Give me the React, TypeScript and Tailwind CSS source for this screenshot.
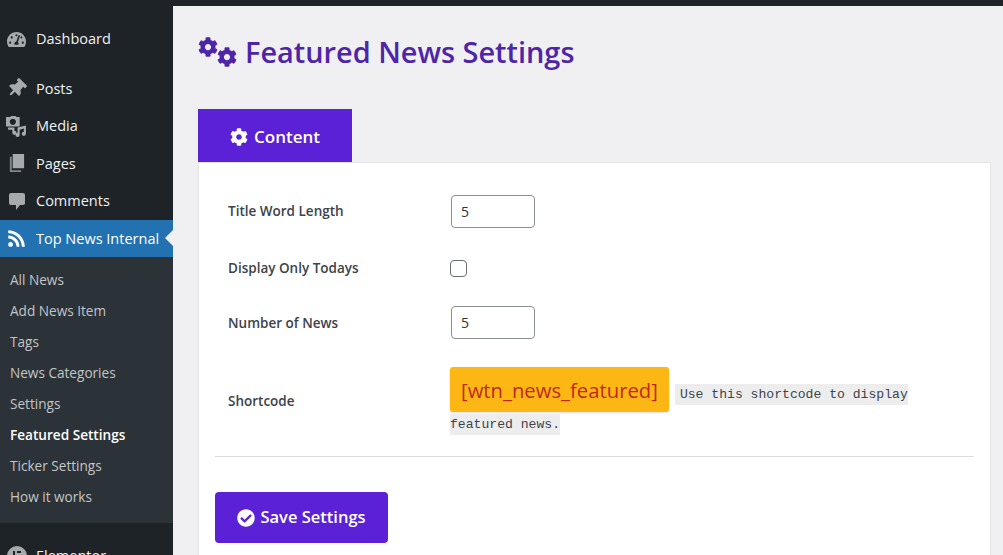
import { FaCheckCircle, FaCog, FaRss, FaTachometerAlt, FaThumbtack } from "react-icons/fa";

const font = "font-['Open_Sans','Noto_Sans',sans-serif]";

function MediaIcon() {
  return (
    <svg viewBox="0 0 20 20" className="h-[21px] w-[21px]" fill="#a7aaad">
      <path d="M0 1h4l1-1h4l1 1h3v9H0z M6.5 2.5a3 3 0 1 0 .01 0z" fillRule="evenodd" />
      <path d="M11 11l8-2v8a2 2 0 1 1-2-2V12l-4 1v5a2 2 0 1 1-2-2z" />
      <path d="M2 11h6v3a2 2 0 1 1-2 2v-3H2z" />
    </svg>
  );
}

function PagesIcon() {
  return (
    <svg viewBox="0 0 20 20" className="h-[19px] w-[19px]" fill="#a7aaad">
      <path d="M6 0h12v15H6z" />
      <path d="M3 3h2v14h10v2H3z" opacity="0.75" />
    </svg>
  );
}

function CommentIcon() {
  return (
    <svg viewBox="0 0 20 20" className="h-[20px] w-[20px]" fill="#a7aaad">
      <path d="M4 2h12a2 2 0 0 1 2 2v8a2 2 0 0 1-2 2h-3l-4 5v-5H4a2 2 0 0 1-2-2V4a2 2 0 0 1 2-2z" />
    </svg>
  );
}

function ElementorIcon() {
  return (
    <svg viewBox="0 0 20 20" className="h-[20px] w-[20px]">
      <circle cx="10" cy="10" r="10" fill="#a7aaad" />
      <path d="M6 5h2v10H6zM10 5h4v2h-4zM10 9h4v2h-4zM10 13h4v2h-4z" fill="#1d2327" />
    </svg>
  );
}

function NumberRow({ label, y }: { label: string; y: string }) {
  return (
    <div className={`flex items-center ${y}`}>
      <span className="w-[236px] pl-[13px] text-[13.5px] font-semibold text-[#3c434a]">{label}</span>
      <input readOnly defaultValue="5" className="h-[33px] w-[84px] rounded border border-[#8c8f94] bg-white px-[9px] text-[14px] text-[#2c3338]" />
    </div>
  );
}

export default function App() {
  const mainMenu = [
    { label: "Posts", icon: <FaThumbtack className="h-[19px] w-[19px] rotate-45 text-[#a7aaad]" /> },
    { label: "Media", icon: <MediaIcon /> },
    { label: "Pages", icon: <PagesIcon /> },
    { label: "Comments", icon: <CommentIcon /> },
  ];
  const subMenu = ["All News", "Add News Item", "Tags", "News Categories", "Settings", "Featured Settings", "Ticker Settings", "How it works"];

  return (
    <div className={`${font} flex h-[555px] w-[1003px] flex-col overflow-hidden bg-[#f0f0f3]`}>
      {/* Admin bar */}
      <div className="h-[6px] shrink-0 bg-[#1d2327]" />

      <div className="flex min-h-0 flex-1">
        {/* Sidebar */}
        <aside className="w-[173px] shrink-0 bg-[#1d2327] pt-[14px] text-[14.5px] text-[#f0f0f1]">
          <div className="flex h-[38px] items-center">
            <span className="flex w-[36px] justify-center pr-[3px]">
              <FaTachometerAlt className="h-[19px] w-[19px] text-[#a7aaad]" />
            </span>
            Dashboard
          </div>
          <div className="h-[12px]" />
          {mainMenu.map((item) => (
            <div key={item.label} className="flex h-[37.5px] items-center">
              <span className="flex w-[36px] justify-center pr-[3px]">{item.icon}</span>
              {item.label}
            </div>
          ))}

          <div className="relative flex h-[37px] items-center bg-[#2271b1] text-white">
            <span className="flex w-[36px] justify-center pr-[3px]">
              <FaRss className="h-[19px] w-[19px]" />
            </span>
            Top News Internal
            <span className="absolute right-0 top-[10px] h-0 w-0 border-y-[8px] border-r-[8px] border-y-transparent border-r-[#f0f0f3]" />
          </div>

          <div className="bg-[#2c3338] pb-[10px] pt-[8px] text-[13.6px] text-[#c3c4c7]">
            {subMenu.map((item) => (
              <div
                key={item}
                className={`flex h-[31px] items-center pl-[10px] ${item === "Featured Settings" ? "font-semibold text-white" : ""}`}
              >
                {item}
              </div>
            ))}
          </div>

          <div className="flex h-[42px] items-center pt-[24px]">
            <span className="flex w-[36px] justify-center pr-[3px]">
              <ElementorIcon />
            </span>
            Elementor
          </div>
        </aside>

        {/* Content */}
        <main className="min-w-0 flex-1 pl-[25px] pr-[12px]">
          <h1 className="flex h-[62px] items-center gap-[8px] pt-[30px] text-[28.9px] font-semibold leading-none text-[#4f25a8]">
            <span className="flex shrink-0 items-start">
              <FaCog className="h-[20px] w-[20px]" />
              <FaCog className="-ml-px mt-[10px] h-[20px] w-[20px]" />
            </span>
            Featured News Settings
          </h1>

          <div className="mt-[41px] flex h-[53px] w-[154px] items-center justify-center gap-[6px] bg-[#5b21d6] pt-[2px] text-[17px] font-semibold text-white">
            <FaCog className="h-[18px] w-[18px]" />
            Content
          </div>

          <section className="h-[400px] border border-[#e4e4e7] bg-white px-[16px]">
            <NumberRow label="Title Word Length" y="pt-[32px]" />

            <div className="flex items-center pt-[30px]">
              <span className="w-[235px] pl-[13px] text-[13.5px] font-semibold text-[#3c434a]">Display Only Todays</span>
              <span className="h-[17px] w-[17px] rounded border border-[#6b6f75] bg-white" />
            </div>

            <NumberRow label="Number of News" y="pt-[28px]" />

            <div className="mt-[28px] flex">
              <span className="w-[235px] pl-[13px] pt-[24px] text-[13.5px] font-semibold text-[#3c434a]">Shortcode</span>
              <div className="w-[470px] leading-[20px]">
                <span className="inline-block h-[45px] rounded-[3px] bg-[#fdb714] px-[11px] text-[20.3px] leading-[46px] text-[#c1271a] shadow-sm">
                  [wtn_news_featured]
                </span>
                <code className="ml-[6px] bg-[#ededed] py-[3px] pl-[5px] font-['Liberation_Mono','DejaVu_Sans_Mono',monospace] text-[13.1px] text-[#3c434a]">
                  Use this shortcode to display
                </code>{" "}
                <code className="bg-[#ededed] py-[3px] font-['Liberation_Mono','DejaVu_Sans_Mono',monospace] text-[13.1px] text-[#3c434a]">
                  featured news.
                </code>
              </div>
            </div>

            <hr className="mt-[21px] border-[#dcdcde]" />

            <button className="mt-[35px] flex h-[51px] w-[173px] items-center justify-center gap-[5px] rounded bg-[#5b21d6] text-[16.5px] font-semibold text-white">
              <FaCheckCircle className="h-[18px] w-[18px]" />
              Save Settings
            </button>
          </section>
        </main>
      </div>
    </div>
  );
}
